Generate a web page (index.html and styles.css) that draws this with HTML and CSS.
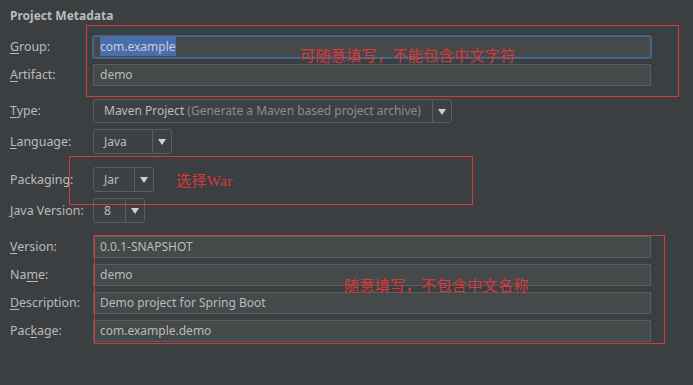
FILE: index.html
```html
<!DOCTYPE html>
<html lang="zh-CN">
<head>
  <meta charset="UTF-8">
  <title>Project Metadata</title>
  <link rel="stylesheet" href="styles.css">
</head>
<body>
  <div class="panel">
    <h2 class="title">Project Metadata</h2>

    <div class="form">
      <div class="group">
        <div class="row">
          <label><u>G</u>roup:</label>
          <div class="field focused"><span class="sel">com.example</span></div>
        </div>
        <div class="row">
          <label><u>A</u>rtifact:</label>
          <div class="field">demo</div>
        </div>
      </div>

      <div class="group">
        <div class="row">
          <label><u>T</u>ype:</label>
          <div class="combo combo-type">
            <span class="value">Maven Project <span class="hint">(Generate a Maven based project archive)</span></span>
            <span class="arrow"></span>
          </div>
        </div>
        <div class="row">
          <label><u>L</u>anguage:</label>
          <div class="combo combo-lang">
            <span class="value">Java</span>
            <span class="arrow"></span>
          </div>
        </div>
      </div>

      <div class="group">
        <div class="row">
          <label>Packaging:</label>
          <div class="combo combo-pack">
            <span class="value">Jar</span>
            <span class="arrow"></span>
          </div>
        </div>
        <div class="row">
          <label><u>J</u>ava Version:</label>
          <div class="combo combo-java">
            <span class="value">8</span>
            <span class="arrow"></span>
          </div>
        </div>
      </div>

      <div class="group">
        <div class="row">
          <label><u>V</u>ersion:</label>
          <div class="field">0.0.1-SNAPSHOT</div>
        </div>
        <div class="row">
          <label>Na<u>m</u>e:</label>
          <div class="field">demo</div>
        </div>
        <div class="row">
          <label><u>D</u>escription:</label>
          <div class="field">Demo project for Spring Boot</div>
        </div>
        <div class="row">
          <label>Pac<u>k</u>age:</label>
          <div class="field">com.example.demo</div>
        </div>
      </div>
    </div>

    <!-- red annotations drawn over the dialog -->
    <div class="note-box box-1"></div>
    <div class="note-text text-1">可随意填写，不能包含中文字符</div>
    <div class="note-box box-2"></div>
    <div class="note-text text-2">选择War</div>
    <div class="note-box box-3"></div>
    <div class="note-text text-3">随意填写，不包含中文名称</div>
  </div>
</body>
</html>
```

FILE: styles.css
```css
html, body { margin: 0; background: #3c3f41; }
body { font-family: "Noto Sans", "Open Sans", sans-serif; font-size: 12px; color: #bbbbbb; }

.panel { position: relative; width: 693px; height: 385px; padding: 0 10px; box-sizing: border-box; }
.title { margin: 0; padding-top: 8px; font-size: 12px; line-height: 16px; font-weight: bold; color: #bbbbbb; }

.form { margin-top: 12px; display: flex; flex-direction: column; gap: 13px; }
.group { display: flex; flex-direction: column; gap: 6px; }
.row { display: flex; align-items: center; }
.row label { width: 83px; flex: none; font-size: 12.4px; line-height: 16px; }
.row label u { text-decoration-thickness: 1px; text-underline-offset: 2px; }

.field { width: 558px; height: 22px; box-sizing: border-box; padding: 0 6px; background: #45494a; border: 1px solid #5a5d5e; line-height: 20px; color: #bbbbbb; white-space: nowrap; }
.field.focused { border-color: #466d94; box-shadow: 0 0 0 1px #3d6185; border-radius: 2px; }
.sel { background: #4a6dac; color: #c8cfda; padding: 1px 0; }

.combo { display: flex; height: 25px; box-sizing: border-box; border: 1px solid #5b5e60; border-radius: 3px; background: #3e4143; }
.combo .value { flex: 1; padding-left: 10px; line-height: 23px; white-space: nowrap; overflow: hidden; }
.combo .hint { color: #8c8c8c; }
.combo .arrow { position: relative; width: 18px; border-left: 1px solid #5b5e60; }
.combo .arrow::after { content: ""; position: absolute; left: 5px; top: 9px; border-left: 4px solid transparent; border-right: 4px solid transparent; border-top: 6px solid #d0d0d0; }

.combo-type { width: 359px; height: 24px; }
.combo-type .value { line-height: 22px; }
.combo-lang { width: 79px; }
.combo-pack { width: 61px; }
.combo-java { width: 52px; }

.note-box { position: absolute; border: 1px solid #d23a3c; box-sizing: border-box; }
.box-1 { left: 86px; top: 25px; width: 593px; height: 72px; }
.box-2 { left: 69px; top: 156px; width: 404px; height: 49px; }
.box-3 { left: 94px; top: 235px; width: 571px; height: 109px; }

.note-text { position: absolute; font-family: "Liberation Serif", "Noto Sans CJK SC", serif; font-size: 15px; line-height: 18px; color: #d8393b; letter-spacing: 0.4px; white-space: nowrap; }
.text-1 { left: 300px; top: 47px; }
.text-2 { left: 176px; top: 172px; }
.text-3 { left: 344px; top: 277px; }
```
